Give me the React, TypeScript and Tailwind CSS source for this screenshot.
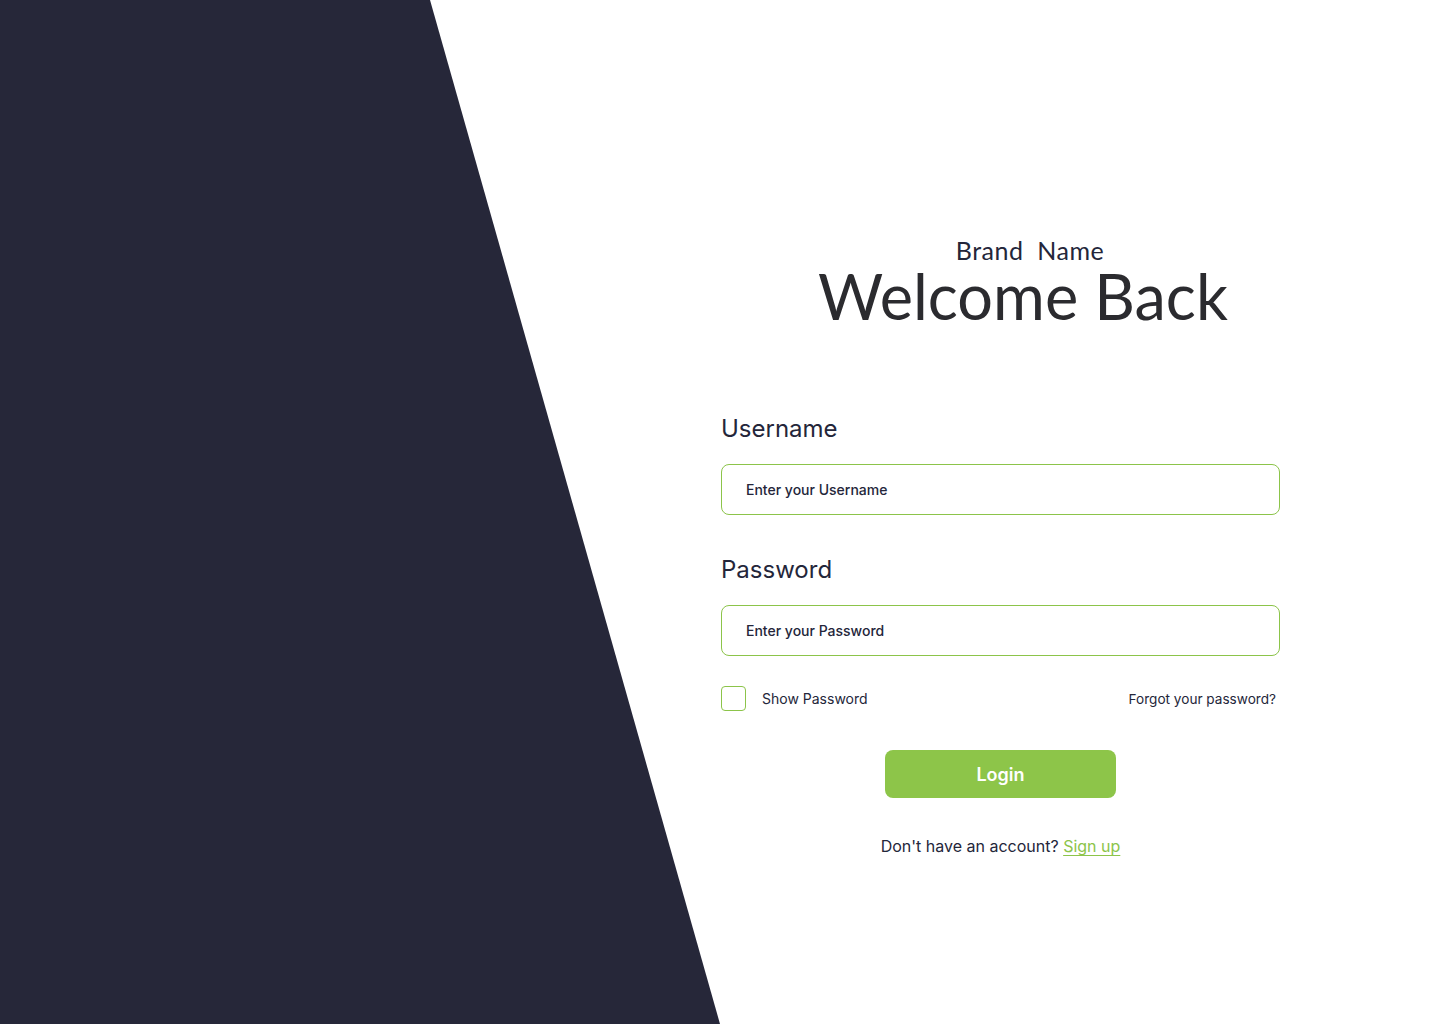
import { useState } from 'react';

const Field: React.FC<{ label: string; placeholder: string; type?: string; className?: string }> = ({
  label,
  placeholder,
  type = 'text',
  className,
}) => (
  <div className={className}>
    <label className="block text-[24px] leading-[32px] text-[#24263a]">{label}</label>
    <input
      type={type}
      placeholder={placeholder}
      className="mt-[19px] block h-[51px] w-full rounded-[8px] border border-[#8cc44a] px-[24px] text-[14px] font-medium text-[#24263a] placeholder:text-[#24263a] outline-none"
    />
  </div>
);

export default function App() {
  const [show, setShow] = useState(false);

  return (
    <div className="flex h-[1024px] w-[1440px] overflow-hidden bg-white font-['Inter',sans-serif]">
      <div className="h-full w-[720px] shrink-0 bg-[#262739] [clip-path:polygon(0_0,430px_0,720px_100%,0_100%)]" />
      <main className="flex-1 pr-[160px] pl-[1px] pt-[236px]">
        <header className="flex flex-col items-center pl-[45px] font-['Lato',sans-serif] text-[#2b2b2f]">
          <div className="ml-[14px] text-[25px] leading-[28px] tracking-[0.5px] text-[#24263a]">Brand&nbsp; Name</div>
          <h1 className="mt-[2px] text-[63px] leading-[60px]">Welcome Back</h1>
        </header>

        <form className="mt-[87px]" onSubmit={e => e.preventDefault()}>
          <Field label="Username" placeholder="Enter your Username" />
          <Field label="Password" placeholder="Enter your Password" type={show ? 'text' : 'password'} className="mt-[39px]" />

          <div className="mt-[30px] flex items-center justify-between">
            <label className="flex items-center gap-[16px] text-[14px] text-[#24263a]">
              <input
                type="checkbox"
                checked={show}
                onChange={e => setShow(e.target.checked)}
                className="h-[25px] w-[25px] appearance-none rounded-[4px] border border-[#8cc44a]"
              />
              Show Password
            </label>
            <a href="#" className="mr-[4px] mt-[2px] text-[13.6px] text-[#24263a]">
              Forgot your password?
            </a>
          </div>

          <div className="mt-[39px] flex justify-center">
            <button
              type="submit"
              className="h-[48px] w-[231px] rounded-[8px] bg-[#8dc549] text-[18px] font-semibold text-white"
            >
              Login
            </button>
          </div>

          <p className="mt-[36px] text-center text-[16px] text-[#24263a]">
            Don't have an account?{' '}
            <a href="#" className="text-[#8cc44a] underline underline-offset-[3px]">
              Sign up
            </a>
          </p>
        </form>
      </main>
    </div>
  );
}
